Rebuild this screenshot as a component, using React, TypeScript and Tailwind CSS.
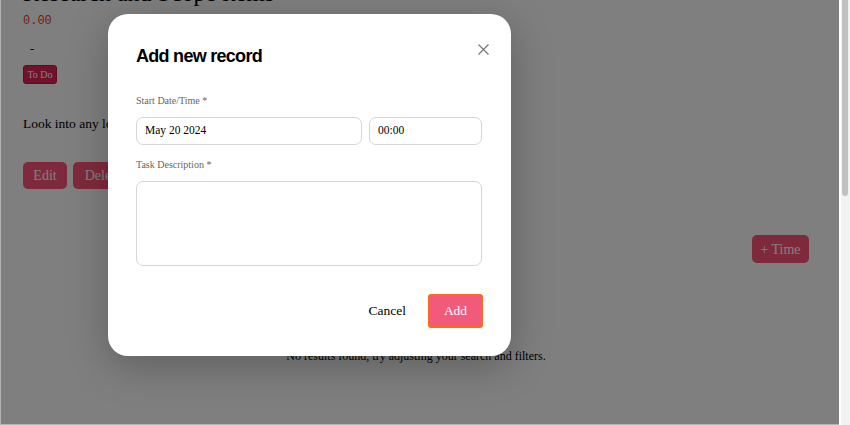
import React from "react";

const serif = { fontFamily: '"Liberation Serif", "DejaVu Serif", serif' };

export default function App() {
  return (
    <div className="flex w-[850px] h-[425px] overflow-hidden bg-white" style={serif}>
      <div className="relative w-[839px] h-[425px] overflow-hidden border-l border-b border-[#b4b4b4] bg-white">
        {/* page behind */}
        <div className="flex flex-col px-[22px]">
          <div className="-mt-[19px] text-[24px] leading-[24px] text-black whitespace-nowrap">Research and Scope items</div>
          <div className="mt-[8px] text-[12px] leading-[16px] text-[#f0341a]" style={{ fontFamily: '"Liberation Mono", "DejaVu Sans Mono", monospace' }}>0.00</div>
          <div className="mt-[12px] pl-[7px] text-[13px] leading-[16px] text-black">-</div>
          <div className="mt-[4px]">
            <span className="inline-flex h-[19px] w-[34px] items-center justify-center rounded-[3px] border border-[#c0143c] bg-[#e22458] text-[10px] text-white">To Do</span>
          </div>
          <div className="mt-[30px] text-[13.5px] leading-[18px] text-black whitespace-nowrap">Look into any local resources for the project and related materials.</div>
          <div className="mt-[29px] flex gap-[6px]">
            <button className="h-[27px] w-[44px] rounded-[5px] bg-[#fe5478] text-[14px] text-white">Edit</button>
            <button className="h-[27px] w-[60px] rounded-[5px] bg-[#fe5478] text-[14px] text-white">Delete</button>
          </div>
          <div className="mt-[46px] flex justify-end pr-[8px]">
            <button className="h-[28px] w-[57px] rounded-[5px] bg-[#fe5478] text-[14px] text-white">+ Time</button>
          </div>
          <div className="mt-[85px] text-center text-[12px] leading-[16px] text-black pr-[8px]">No results found, try adjusting your search and filters.</div>
        </div>

        {/* overlay */}
        <div className="absolute inset-0 bg-black/50" />

        {/* modal */}
        <div className="absolute left-[107px] top-[14px] w-[403px] h-[342px] rounded-[20px] bg-white shadow-[0_10px_40px_rgba(0,0,0,0.25)] px-[28px] pt-[31px]">
          <button className="absolute right-[22px] top-[30px] text-[#777]" aria-label="Close">
            <svg width="11" height="11" viewBox="0 0 11 11" fill="none" stroke="currentColor" strokeWidth="1.2">
              <path d="M0.5 0.5 L10.5 10.5 M10.5 0.5 L0.5 10.5" />
            </svg>
          </button>
          <h2 className="text-[18px] leading-[22px] font-bold tracking-[-0.04em] text-black" style={{ fontFamily: '"Liberation Sans", Arial, sans-serif' }}>Add new record</h2>
          <label className="mt-[27px] block text-[10px] leading-[14px] text-[#666]">Start Date/Time *</label>
          <div className="mt-[9px] flex gap-[7px]">
            <div className="flex h-[28px] w-[226px] items-center rounded-[7px] border border-[#d6d6d6] pl-[8px] text-[11.5px] text-black">May 20 2024</div>
            <div className="flex h-[28px] w-[113px] items-center rounded-[7px] border border-[#d6d6d6] pl-[8px] text-[11.5px] text-black">00:00</div>
          </div>
          <label className="mt-[13px] block text-[10px] leading-[14px] text-[#666]">Task Description *</label>
          <div className="mt-[9px] h-[85px] w-[346px] rounded-[7px] border border-[#d6d6d6]" />
          <div className="mt-[28px] flex items-center justify-end gap-[22px]">
            <button className="text-[13.5px] text-black">Cancel</button>
            <button className="h-[34px] w-[55px] rounded-[3px] border-2 border-[#ff6a1a] bg-[#f25a7b] text-[13.5px] text-white">Add</button>
          </div>
        </div>
      </div>
      {/* scrollbar */}
      <div className="flex w-[11px] h-[425px] border-l-2 border-white bg-[#f2f2f2] pl-[1px]">
        <div className="h-[196px] w-[6px] rounded-b-[3px] bg-[#c1c1c1]" />
      </div>
    </div>
  );
}
